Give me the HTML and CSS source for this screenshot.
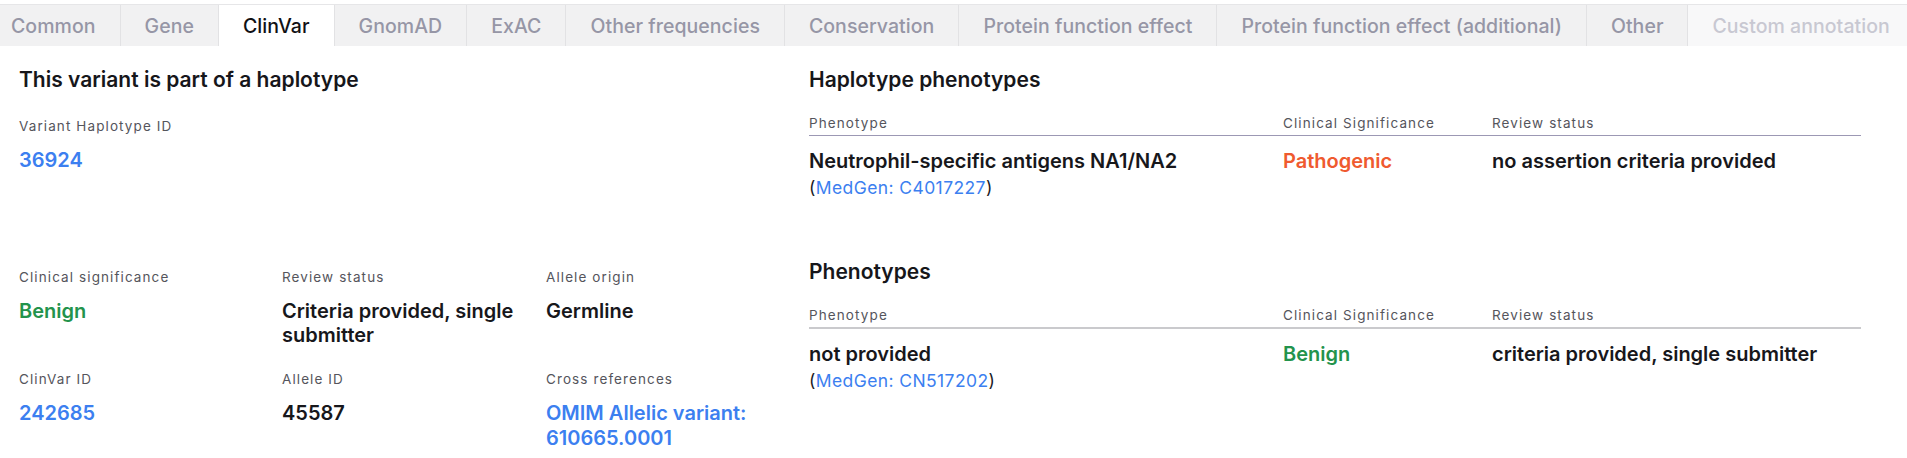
FILE: index.html
```html
<!DOCTYPE html>
<html lang="en">
<head>
<meta charset="utf-8">
<title>ClinVar</title>
<link rel="stylesheet" href="styles.css">
</head>
<body>
<nav class="tabs">
  <div class="tab-strip">
    <span class="tab">Common</span>
    <span class="tab">Gene</span>
    <span class="tab active">ClinVar</span>
    <span class="tab">GnomAD</span>
    <span class="tab">ExAC</span>
    <span class="tab">Other frequencies</span>
    <span class="tab">Conservation</span>
    <span class="tab">Protein function effect</span>
    <span class="tab">Protein function effect (additional)</span>
    <span class="tab">Other</span>
    <span class="tab disabled">Custom annotation</span>
  </div>
</nav>
<main class="content">
  <section class="left">
    <h2 class="heading">This variant is part of a haplotype</h2>
    <div class="field">
      <div class="label">Variant Haplotype ID</div>
      <a class="value link">36924</a>
    </div>
    <div class="grid">
      <div class="field">
        <div class="label">Clinical significance</div>
        <div class="value benign">Benign</div>
      </div>
      <div class="field">
        <div class="label">Review status</div>
        <div class="value">Criteria provided, single submitter</div>
      </div>
      <div class="field">
        <div class="label">Allele origin</div>
        <div class="value">Germline</div>
      </div>
      <div class="field">
        <div class="label">ClinVar ID</div>
        <a class="value link">242685</a>
      </div>
      <div class="field">
        <div class="label">Allele ID</div>
        <div class="value">45587</div>
      </div>
      <div class="field">
        <div class="label">Cross references</div>
        <a class="value link multi">OMIM Allelic variant: 610665.0001</a>
      </div>
    </div>
  </section>
  <section class="right">
    <h2 class="heading">Haplotype phenotypes</h2>
    <table class="pheno first">
      <thead>
        <tr><th>Phenotype</th><th>Clinical Significance</th><th>Review status</th></tr>
      </thead>
      <tbody>
        <tr>
          <td><div class="value">Neutrophil-specific antigens NA1/NA2</div><div class="ref">(<a class="small-link">MedGen: C4017227</a>)</div></td>
          <td><div class="value pathogenic">Pathogenic</div></td>
          <td><div class="value">no assertion criteria provided</div></td>
        </tr>
      </tbody>
    </table>
    <h2 class="heading second-heading">Phenotypes</h2>
    <table class="pheno second">
      <thead>
        <tr><th>Phenotype</th><th>Clinical Significance</th><th>Review status</th></tr>
      </thead>
      <tbody>
        <tr>
          <td><div class="value">not provided</div><div class="ref">(<a class="small-link">MedGen: CN517202</a>)</div></td>
          <td><div class="value benign">Benign</div></td>
          <td><div class="value">criteria provided, single submitter</div></td>
        </tr>
      </tbody>
    </table>
  </section>
</main>
</body>
</html>
```

FILE: styles.css
```css
* { box-sizing: border-box; }
html, body {
  margin: 0;
  padding: 0;
  background: #ffffff;
  font-family: Inter, "Noto Sans", sans-serif;
  color: #1b1b1f;
  overflow: hidden;
}
.tabs {
  margin-top: 4px;
  border-top: 1px solid #e6e6e8;
  background: #f1f1f2;
  height: 42px;
  overflow: hidden;
}
.tab-strip {
  display: flex;
  margin-left: -13px;
  height: 41px;
  white-space: nowrap;
}
.tab {
  display: flex;
  align-items: center;
  padding: 0 24px;
  font-size: 19.5px;
  font-weight: 500;
  color: #9696a6;
  border-right: 1px solid #e2e2e4;
  letter-spacing: 0.05px;
}
.tab.active {
  background: #ffffff;
  color: #111114;
}
.tab.disabled {
  background: #f8f8f9;
  color: #c8c8d2;
  border-right: none;
}
.content {
  display: grid;
  grid-template-columns: 790px 1052px;
  padding: 22px 19px 0 19px;
}
.heading {
  margin: 0;
  font-size: 21px;
  line-height: 24px;
  font-weight: 600;
  color: #16161a;
  letter-spacing: 0;
}
.label {
  font-size: 13.5px;
  line-height: 16px;
  color: #55555c;
  letter-spacing: 1.1px;
}
.value {
  display: block;
  font-size: 20px;
  line-height: 24px;
  font-weight: 600;
  color: #17171b;
  letter-spacing: 0;
}
.left .heading { margin-bottom: 26px; }
.field .label { margin-bottom: 14px; }
.link { color: #3c7ff0; text-decoration: none; }
.benign { color: #23934c; }
.pathogenic { color: #ef5a2f; }
.grid {
  margin-top: 97px;
  display: grid;
  grid-template-columns: 263px 264px 263px;
  row-gap: 24px;
}
.grid .value { padding-right: 20px; }
.grid .value.multi { line-height: 25px; margin-top: 2px; }
.pheno {
  width: 1052px;
  border-collapse: collapse;
  margin-top: 23px;
}
.pheno th {
  text-align: left;
  font-weight: 400;
  font-size: 13.5px;
  line-height: 16px;
  color: #55555c;
  letter-spacing: 1.1px;
  padding: 0 0 4px 0;
  border-bottom: 1px solid #9c98b4;
}
.pheno.second th { border-bottom: 2px solid #cacacd; }
.pheno th:nth-child(1) { width: 474px; }
.pheno th:nth-child(2) { width: 209px; }
.pheno td {
  vertical-align: top;
  padding: 13px 0 0 0;
}
.ref {
  font-size: 17.5px;
  line-height: 24px;
  color: #1b1b1f;
  margin-top: 3px;
  letter-spacing: 0.4px;
}
.small-link { color: #3c7ff0; }
.second-heading { margin-top: 60px; }
```
